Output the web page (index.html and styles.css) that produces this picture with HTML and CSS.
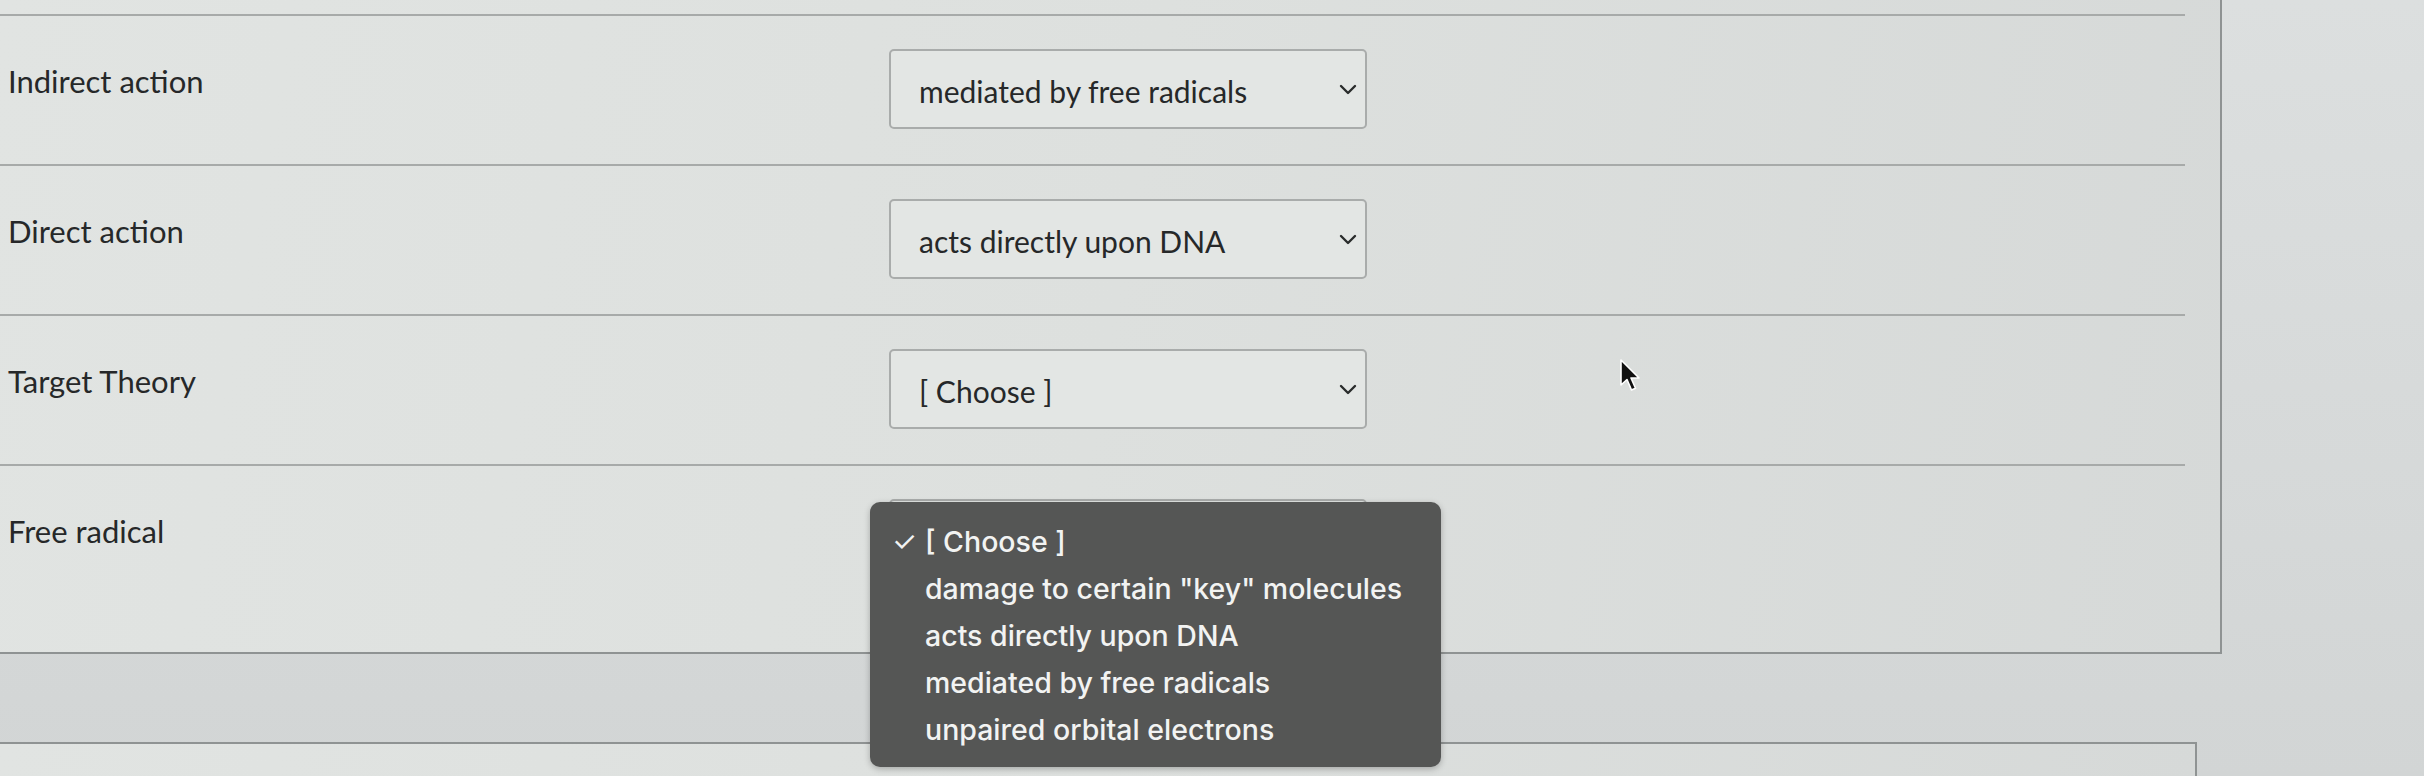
FILE: index.html
```html
<!DOCTYPE html>
<html>
<head>
<meta charset="utf-8">
<link rel="stylesheet" href="styles.css">
</head>
<body>
<div class="page">
  <section class="panel">
    <div class="row">
      <div class="label">Indirect action</div>
      <div class="select">
        <span class="value">mediated by free radicals</span>
        <svg class="chev" width="18" height="11" viewBox="0 0 18 11"><path d="M2 2 L9 9 L16 2" fill="none" stroke="#2a2c2c" stroke-width="2.4" stroke-linecap="round" stroke-linejoin="round"/></svg>
      </div>
    </div>
    <div class="row">
      <div class="label">Direct action</div>
      <div class="select">
        <span class="value">acts directly upon DNA</span>
        <svg class="chev" width="18" height="11" viewBox="0 0 18 11"><path d="M2 2 L9 9 L16 2" fill="none" stroke="#2a2c2c" stroke-width="2.4" stroke-linecap="round" stroke-linejoin="round"/></svg>
      </div>
    </div>
    <div class="row">
      <div class="label">Target Theory</div>
      <div class="select">
        <span class="value">[ Choose ]</span>
        <svg class="chev" width="18" height="11" viewBox="0 0 18 11"><path d="M2 2 L9 9 L16 2" fill="none" stroke="#2a2c2c" stroke-width="2.4" stroke-linecap="round" stroke-linejoin="round"/></svg>
      </div>
    </div>
    <div class="row last">
      <div class="label">Free radical</div>
      <div class="select open">
        <ul class="menu">
          <li class="checked"><span class="check">✓</span>[ Choose ]</li>
          <li><span class="check"></span>damage to certain "key" molecules</li>
          <li><span class="check"></span>acts directly upon DNA</li>
          <li><span class="check"></span>mediated by free radicals</li>
          <li><span class="check"></span>unpaired orbital electrons</li>
        </ul>
      </div>
    </div>
    <svg class="cursor" width="24" height="34" viewBox="0 0 24 34"><path d="M2 1 L2 26 L8 20.5 L12.5 31 L16.5 29.3 L12 19 L20 19 Z" fill="#111" stroke="#fff" stroke-width="1.6" stroke-linejoin="round"/></svg>
  </section>
  <section class="panel next"></section>
</div>
</body>
</html>
```
FILE: styles.css
```css
html, body {
  margin: 0;
  padding: 0;
}
body {
  width: 2424px;
  height: 776px;
  overflow: hidden;
  background: linear-gradient(180deg, #dcdfdf 0%, #d2d5d5 100%);
  font-family: Lato, "Open Sans", sans-serif;
  color: #262829;
}
.page {
  display: flex;
  flex-direction: column;
  gap: 88px;
}
.panel {
  position: relative;
  width: 2185px;
  padding: 14px 35px 0 0;
  background: linear-gradient(100deg, #e1e4e2 0%, #dde0de 50%, #d6d9d8 100%);
  border-right: 2px solid #8f9393;
  border-bottom: 2px solid #8f9393;
}
.row {
  display: flex;
  align-items: flex-start;
  height: 150px;
  padding-top: 33px;
  box-sizing: border-box;
  border-top: 2px solid #a7aaa9;
}
.row.last {
  height: 188px;
}
.label {
  width: 881px;
  padding-left: 8px;
  margin-top: 14px;
  font-size: 31px;
  line-height: 36px;
}
.select {
  position: relative;
  width: 478px;
  height: 80px;
  box-sizing: border-box;
  border: 2px solid #a9acab;
  border-radius: 5px;
  background: #e3e6e4;
  display: flex;
  align-items: center;
  justify-content: space-between;
  padding: 0 8px 0 28px;
  font-size: 30px;
}
.value {
  margin-top: 4px;
}
.chev {
  display: block;
}
.menu {
  position: absolute;
  left: -21px;
  top: 1px;
  width: 571px;
  height: 265px;
  box-sizing: border-box;
  margin: 0;
  padding: 16px 0 0 22px;
  list-style: none;
  background: #555655;
  border-radius: 10px;
  box-shadow: 0 2px 6px rgba(0,0,0,0.25);
  font-family: Inter, "Liberation Sans", Arial, sans-serif;
  font-size: 28.5px;
  font-weight: 500;
  color: #f2f3f2;
  z-index: 2;
}
.menu li {
  display: flex;
  align-items: center;
  height: 47px;
  line-height: 47px;
}
.check {
  display: inline-block;
  width: 33px;
  font-size: 28px;
  font-weight: 400;
}
.cursor {
  position: absolute;
  left: 1619px;
  top: 359px;
}
.next {
  height: 60px;
  width: 2195px;
  padding: 0;
  border-top: 2px solid #8f9393;
  border-bottom: none;
}
```
